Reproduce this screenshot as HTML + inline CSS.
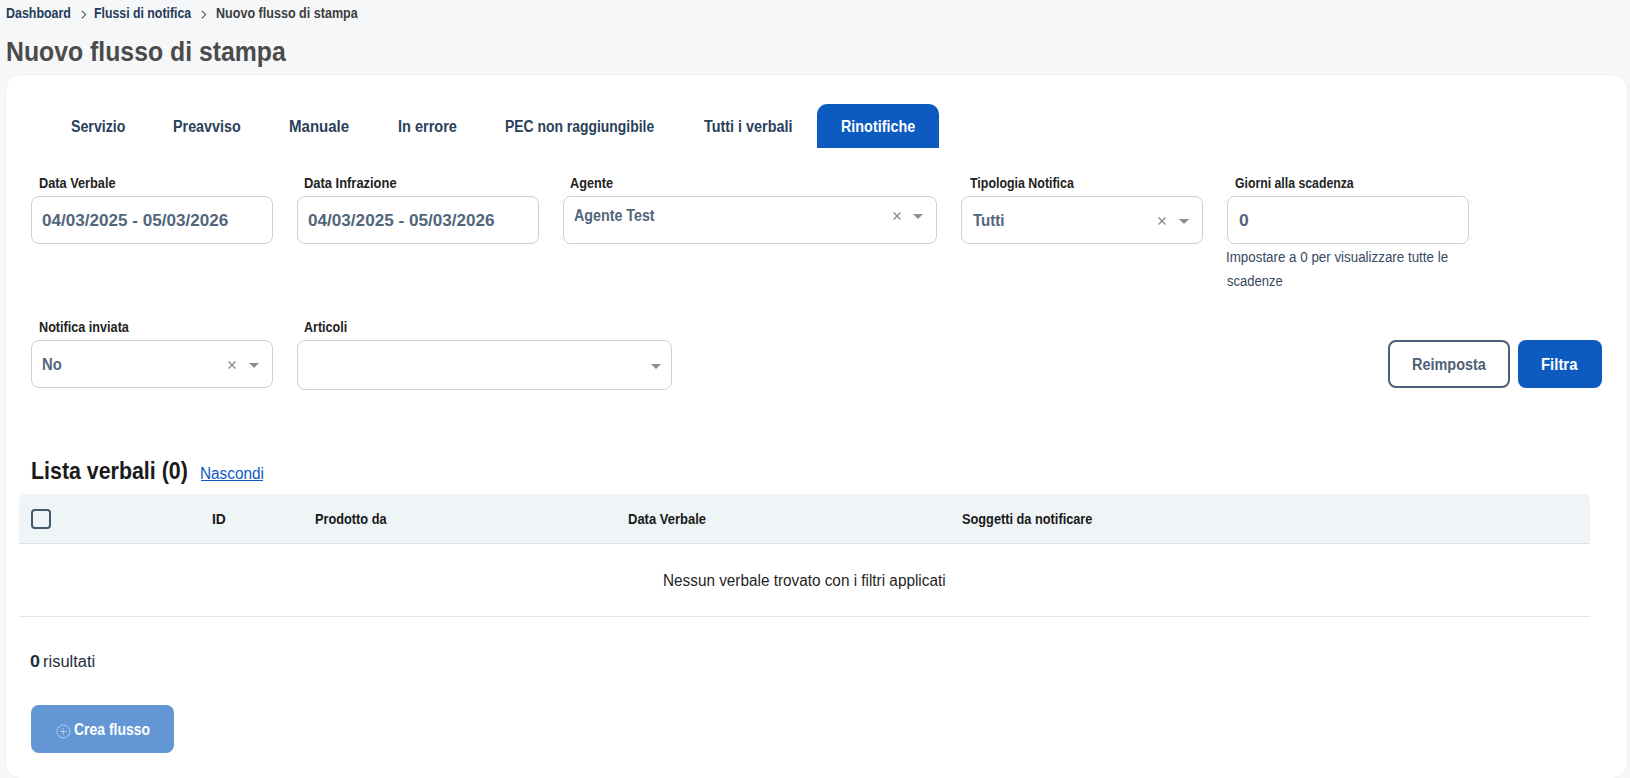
<!DOCTYPE html>
<html lang="it"><head><meta charset="utf-8"><title>Nuovo flusso di stampa</title>
<style>
html,body{margin:0;padding:0}
body{width:1630px;height:778px;overflow:hidden;background:#f6f7f9;position:relative;font-family:"Liberation Sans",sans-serif}
.tx{position:absolute;white-space:nowrap;line-height:1;transform-origin:0 0}
.card{position:absolute;left:5px;top:74px;width:1623px;height:705px;box-sizing:border-box;background:#fff;border:1px solid #eff1f3;border-radius:16px}
.tabact{position:absolute;left:817px;top:104px;width:122px;height:44px;background:#0d5bc1;border-radius:10px 10px 0 0}
.inp{position:absolute;box-sizing:border-box;background:#fff;border:1px solid #cfd0d2;border-radius:8px}
.btn{position:absolute;box-sizing:border-box;border-radius:8px}
.ico{position:absolute}
.thead{position:absolute;left:19px;top:494px;width:1571px;height:49px;background:#eff4f7;border-radius:6px 6px 0 0;border-bottom:1px solid #dde1e5}
.rowline{position:absolute;left:19px;top:616px;width:1571px;height:1px;background:#e3e6e9}
.chk{position:absolute;left:31px;top:509px;width:20px;height:20px;box-sizing:border-box;border:2px solid #44576b;border-radius:4px}

</style></head><body>
<div class="card"></div>
<div class="tabact"></div>
<div class="inp" style="left:31px;top:196px;width:242px;height:48px"></div>
<div class="inp" style="left:297px;top:196px;width:242px;height:48px"></div>
<div class="inp" style="left:563px;top:196px;width:374px;height:48px"></div>
<div class="inp" style="left:961px;top:196px;width:242px;height:48px"></div>
<div class="inp" style="left:1227px;top:196px;width:242px;height:48px"></div>
<div class="inp" style="left:31px;top:340px;width:242px;height:48px"></div>
<div class="inp" style="left:297px;top:340px;width:375px;height:49.5px"></div>
<div class="btn" style="left:1388px;top:340px;width:122px;height:48px;border:2px solid #4d6075"></div>
<div class="btn" style="left:1518px;top:340px;width:84px;height:48px;background:#0d5bc1"></div>
<div class="thead"></div>
<div class="chk"></div>
<div class="rowline"></div>
<div class="btn" style="left:31px;top:705px;width:143px;height:48px;background:#6396d5"></div>
<svg class="ico" style="left:55.5px;top:723.5px" width="15" height="15" viewBox="0 0 15 15"><circle cx="7.4" cy="7.4" r="6.4" fill="none" stroke="#fff" stroke-opacity="0.9" stroke-width="0.9" stroke-dasharray="1.3 0.8"/><path d="M7.2 4.2V10.6M4.0 7.4H10.4" stroke="#fff" stroke-opacity="0.55" stroke-width="0.9"/></svg>
<svg class="ico" style="left:80.5px;top:9.8px" width="6" height="9" viewBox="0 0 6 9"><path d="M0.9 0.9L4.6 4.6L0.9 8.3" fill="none" stroke="#555" stroke-width="1.1"/></svg><svg class="ico" style="left:201px;top:9.8px" width="6" height="9" viewBox="0 0 6 9"><path d="M0.9 0.9L4.6 4.6L0.9 8.3" fill="none" stroke="#555" stroke-width="1.1"/></svg>
<svg class="ico" style="left:892.8px;top:212.1px" width="8" height="8" viewBox="0 0 8 8"><path d="M0.6 0.6L7.4 7.4M7.4 0.6L0.6 7.4" stroke="#8a8a8a" stroke-width="1.35"/></svg><svg class="ico" style="left:913.2px;top:214px" width="10" height="5" viewBox="0 0 10 5"><path d="M0 0H10L5 5Z" fill="#8e8e8e"/></svg>
<svg class="ico" style="left:1158.3px;top:217.1px" width="8" height="8" viewBox="0 0 8 8"><path d="M0.6 0.6L7.4 7.4M7.4 0.6L0.6 7.4" stroke="#8a8a8a" stroke-width="1.35"/></svg><svg class="ico" style="left:1179.3px;top:219px" width="10" height="5" viewBox="0 0 10 5"><path d="M0 0H10L5 5Z" fill="#8e8e8e"/></svg>
<svg class="ico" style="left:228px;top:361.3px" width="8" height="8" viewBox="0 0 8 8"><path d="M0.6 0.6L7.4 7.4M7.4 0.6L0.6 7.4" stroke="#8a8a8a" stroke-width="1.35"/></svg><svg class="ico" style="left:249.4px;top:363px" width="10" height="5" viewBox="0 0 10 5"><path d="M0 0H10L5 5Z" fill="#8e8e8e"/></svg>
<svg class="ico" style="left:651.1px;top:364px" width="10" height="5" viewBox="0 0 10 5"><path d="M0 0H10L5 5Z" fill="#8e8e8e"/></svg>
<div class="tx" id="bc1" style="left:6.29px;top:6.00px;font-size:14px;font-weight:700;color:#243c5a;transform:scaleX(0.8884)">Dashboard</div>
<div class="tx" id="bc2" style="left:94.38px;top:6.00px;font-size:14px;font-weight:700;color:#243c5a;transform:scaleX(0.8792)">Flussi di notifica</div>
<div class="tx" id="bc3" style="left:216.05px;top:6.00px;font-size:14px;font-weight:700;color:#3d3d3d;transform:scaleX(0.8979)">Nuovo flusso di stampa</div>
<div class="tx" id="title" style="left:6.16px;top:38.00px;font-size:28px;font-weight:700;color:#4b4b4b;transform:scaleX(0.8859)">Nuovo flusso di stampa</div>
<div class="tx" id="tab1" style="left:71.04px;top:119.00px;font-size:15.8px;font-weight:700;color:#2a415b;transform:scaleX(0.8982)">Servizio</div>
<div class="tx" id="tab2" style="left:172.79px;top:119.00px;font-size:15.8px;font-weight:700;color:#2a415b;transform:scaleX(0.9071)">Preavviso</div>
<div class="tx" id="tab3" style="left:289.05px;top:119.00px;font-size:15.8px;font-weight:700;color:#2a415b;transform:scaleX(0.9519)">Manuale</div>
<div class="tx" id="tab4" style="left:397.88px;top:119.00px;font-size:15.8px;font-weight:700;color:#2a415b;transform:scaleX(0.9190)">In errore</div>
<div class="tx" id="tab5" style="left:505.14px;top:119.00px;font-size:15.8px;font-weight:700;color:#2a415b;transform:scaleX(0.8806)">PEC non raggiungibile</div>
<div class="tx" id="tab6" style="left:704.38px;top:119.00px;font-size:15.8px;font-weight:700;color:#2a415b;transform:scaleX(0.9109)">Tutti i verbali</div>
<div class="tx" id="tab7" style="left:840.61px;top:119.00px;font-size:15.8px;font-weight:700;color:#ffffff;transform:scaleX(0.9086)">Rinotifiche</div>
<div class="tx" id="l1" style="left:38.81px;top:176.00px;font-size:14px;font-weight:700;color:#232323;transform:scaleX(0.9105)">Data Verbale</div>
<div class="tx" id="l2" style="left:304.13px;top:176.00px;font-size:14px;font-weight:700;color:#232323;transform:scaleX(0.9225)">Data Infrazione</div>
<div class="tx" id="l3" style="left:570.06px;top:176.00px;font-size:14px;font-weight:700;color:#232323;transform:scaleX(0.9060)">Agente</div>
<div class="tx" id="l4" style="left:969.95px;top:176.00px;font-size:14px;font-weight:700;color:#232323;transform:scaleX(0.8861)">Tipologia Notifica</div>
<div class="tx" id="l5" style="left:1235.14px;top:176.00px;font-size:14px;font-weight:700;color:#232323;transform:scaleX(0.8767)">Giorni alla scadenza</div>
<div class="tx" id="l6" style="left:38.81px;top:320.00px;font-size:14px;font-weight:700;color:#232323;transform:scaleX(0.9026)">Notifica inviata</div>
<div class="tx" id="l7" style="left:304.43px;top:320.00px;font-size:14px;font-weight:700;color:#232323;transform:scaleX(0.8955)">Articoli</div>
<div class="tx" id="v1" style="left:42.32px;top:213.00px;font-size:15.8px;font-weight:700;color:#52667b;transform:scaleX(1.0814)">04/03/2025 - 05/03/2026</div>
<div class="tx" id="v2" style="left:307.93px;top:213.00px;font-size:15.8px;font-weight:700;color:#52667b;transform:scaleX(1.0839)">04/03/2025 - 05/03/2026</div>
<div class="tx" id="v3" style="left:573.92px;top:208.00px;font-size:15.8px;font-weight:700;color:#52667b;transform:scaleX(0.9030)">Agente Test</div>
<div class="tx" id="v4" style="left:972.98px;top:213.00px;font-size:15.8px;font-weight:700;color:#52667b;transform:scaleX(0.9538)">Tutti</div>
<div class="tx" id="v5" style="left:1238.61px;top:213.00px;font-size:15.8px;font-weight:700;color:#52667b;transform:scaleX(1.1076)">0</div>
<div class="tx" id="v6" style="left:41.91px;top:357.00px;font-size:15.8px;font-weight:700;color:#52667b;transform:scaleX(0.9398)">No</div>
<div class="tx" id="h1" style="left:1225.95px;top:250.00px;font-size:14px;font-weight:400;color:#36495f;transform:scaleX(0.9544)">Impostare a 0 per visualizzare tutte le</div>
<div class="tx" id="h2" style="left:1226.63px;top:274.00px;font-size:14px;font-weight:400;color:#36495f;transform:scaleX(0.9310)">scadenze</div>
<div class="tx" id="b1" style="left:1412.13px;top:357.00px;font-size:15.8px;font-weight:700;color:#4d6075;transform:scaleX(0.9146)">Reimposta</div>
<div class="tx" id="b2" style="left:1541.15px;top:357.00px;font-size:15.8px;font-weight:700;color:#ffffff;transform:scaleX(0.9434)">Filtra</div>
<div class="tx" id="lista" style="left:30.55px;top:459.00px;font-size:24px;font-weight:700;color:#1a1a1a;transform:scaleX(0.8905)">Lista verbali (0)</div>
<div class="tx" id="nasc" style="left:199.73px;top:466.00px;font-size:15.8px;font-weight:400;color:#0b5ac1;transform:scaleX(0.9713)">Nascondi</div>
<div class="tx" id="th1" style="left:211.99px;top:512.00px;font-size:14px;font-weight:700;color:#1a1a1a;transform:scaleX(0.9884)">ID</div>
<div class="tx" id="th2" style="left:315.38px;top:512.00px;font-size:14px;font-weight:700;color:#1a1a1a;transform:scaleX(0.9103)">Prodotto da</div>
<div class="tx" id="th3" style="left:628.03px;top:512.00px;font-size:14px;font-weight:700;color:#1a1a1a;transform:scaleX(0.9277)">Data Verbale</div>
<div class="tx" id="th4" style="left:961.72px;top:512.00px;font-size:14px;font-weight:700;color:#1a1a1a;transform:scaleX(0.9113)">Soggetti da notificare</div>
<div class="tx" id="empty" style="left:663.29px;top:573.00px;font-size:15.8px;font-weight:400;color:#1f1f1f;transform:scaleX(0.9693)">Nessun verbale trovato con i filtri applicati</div>
<div class="tx" id="res0" style="left:29.96px;top:654.00px;font-size:15.8px;font-weight:700;color:#1e2e3e;transform:scaleX(1.1327)">0</div>
<div class="tx" id="res1" style="left:42.99px;top:654.00px;font-size:15.8px;font-weight:400;color:#1e2e3e;transform:scaleX(1.0443)">risultati</div>
<div class="tx" id="crea" style="left:74.04px;top:722.00px;font-size:15.8px;font-weight:700;color:#ffffff;transform:scaleX(0.8832)">Crea flusso</div>
<div class="ul" style="position:absolute;left:201px;top:480px;width:62px;height:1px;background:#0b5ac1"></div>
</body></html>
